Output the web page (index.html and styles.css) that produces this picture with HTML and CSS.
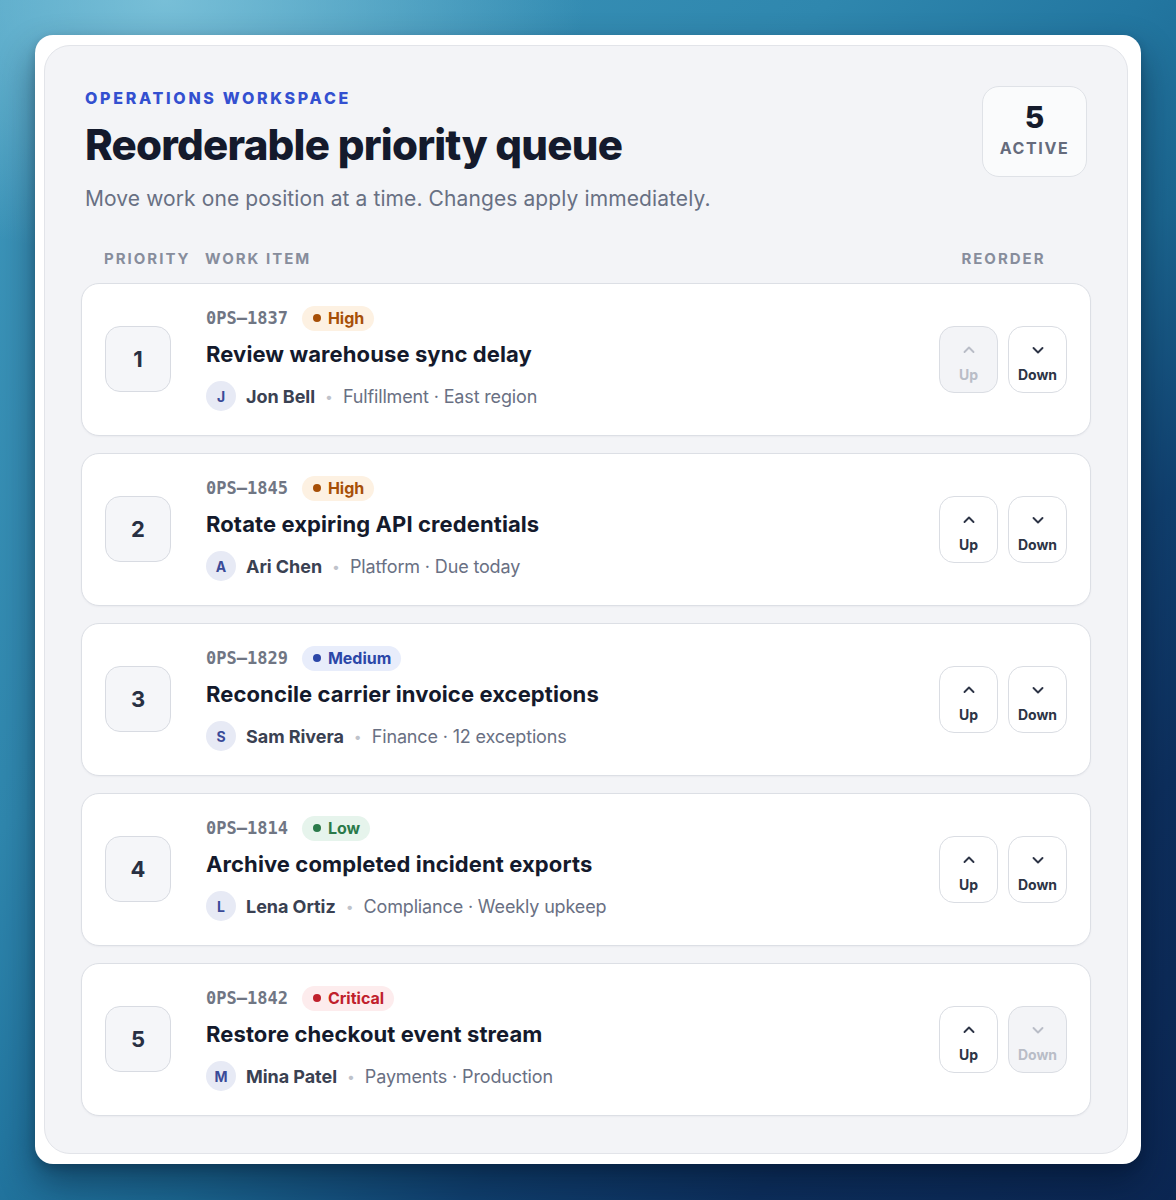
FILE: index.html
```html
<!DOCTYPE html>
<html lang="en">
<head>
<meta charset="utf-8">
<title>Reorderable priority queue</title>
<link rel="stylesheet" href="styles.css">
</head>
<body>
<div class="frame">
  <main class="panel">
    <header class="head">
      <div class="head-text">
        <div class="eyebrow">OPERATIONS WORKSPACE</div>
        <h1 class="title">Reorderable priority queue</h1>
        <p class="sub">Move work one position at a time. Changes apply immediately.</p>
      </div>
      <div class="count">
        <div class="count-num">5</div>
        <div class="count-label">ACTIVE</div>
      </div>
    </header>

    <div class="cols">
      <span class="col-pri">PRIORITY</span>
      <span class="col-item">WORK ITEM</span>
      <span class="col-re">REORDER</span>
    </div>

    <ol class="list">
      <li class="row">
        <div class="rank">1</div>
        <div class="body">
          <div class="line1"><span class="id">0PS–1837</span><span class="pill high"><i class="dot"></i>High</span></div>
          <div class="name">Review warehouse sync delay</div>
          <div class="meta"><span class="av">J</span><span class="who">Jon Bell</span><span class="sep">•</span><span class="info">Fulfillment · East region</span></div>
        </div>
        <div class="btns">
          <button class="btn" disabled><svg viewBox="0 0 14 14"><path d="M2.5 9 L7 4.5 L11.5 9"/></svg><span>Up</span></button>
          <button class="btn"><svg viewBox="0 0 14 14"><path d="M2.5 5 L7 9.5 L11.5 5"/></svg><span>Down</span></button>
        </div>
      </li>
      <li class="row">
        <div class="rank">2</div>
        <div class="body">
          <div class="line1"><span class="id">0PS–1845</span><span class="pill high"><i class="dot"></i>High</span></div>
          <div class="name">Rotate expiring API credentials</div>
          <div class="meta"><span class="av">A</span><span class="who">Ari Chen</span><span class="sep">•</span><span class="info">Platform · Due today</span></div>
        </div>
        <div class="btns">
          <button class="btn"><svg viewBox="0 0 14 14"><path d="M2.5 9 L7 4.5 L11.5 9"/></svg><span>Up</span></button>
          <button class="btn"><svg viewBox="0 0 14 14"><path d="M2.5 5 L7 9.5 L11.5 5"/></svg><span>Down</span></button>
        </div>
      </li>
      <li class="row">
        <div class="rank">3</div>
        <div class="body">
          <div class="line1"><span class="id">0PS–1829</span><span class="pill medium"><i class="dot"></i>Medium</span></div>
          <div class="name">Reconcile carrier invoice exceptions</div>
          <div class="meta"><span class="av">S</span><span class="who">Sam Rivera</span><span class="sep">•</span><span class="info">Finance · 12 exceptions</span></div>
        </div>
        <div class="btns">
          <button class="btn"><svg viewBox="0 0 14 14"><path d="M2.5 9 L7 4.5 L11.5 9"/></svg><span>Up</span></button>
          <button class="btn"><svg viewBox="0 0 14 14"><path d="M2.5 5 L7 9.5 L11.5 5"/></svg><span>Down</span></button>
        </div>
      </li>
      <li class="row">
        <div class="rank">4</div>
        <div class="body">
          <div class="line1"><span class="id">0PS–1814</span><span class="pill low"><i class="dot"></i>Low</span></div>
          <div class="name">Archive completed incident exports</div>
          <div class="meta"><span class="av">L</span><span class="who">Lena Ortiz</span><span class="sep">•</span><span class="info">Compliance · Weekly upkeep</span></div>
        </div>
        <div class="btns">
          <button class="btn"><svg viewBox="0 0 14 14"><path d="M2.5 9 L7 4.5 L11.5 9"/></svg><span>Up</span></button>
          <button class="btn"><svg viewBox="0 0 14 14"><path d="M2.5 5 L7 9.5 L11.5 5"/></svg><span>Down</span></button>
        </div>
      </li>
      <li class="row">
        <div class="rank">5</div>
        <div class="body">
          <div class="line1"><span class="id">0PS–1842</span><span class="pill critical"><i class="dot"></i>Critical</span></div>
          <div class="name">Restore checkout event stream</div>
          <div class="meta"><span class="av">M</span><span class="who">Mina Patel</span><span class="sep">•</span><span class="info">Payments · Production</span></div>
        </div>
        <div class="btns">
          <button class="btn"><svg viewBox="0 0 14 14"><path d="M2.5 9 L7 4.5 L11.5 9"/></svg><span>Up</span></button>
          <button class="btn" disabled><svg viewBox="0 0 14 14"><path d="M2.5 5 L7 9.5 L11.5 5"/></svg><span>Down</span></button>
        </div>
      </li>
    </ol>
  </main>
</div>
</body>
</html>
```

FILE: styles.css
```css
* { box-sizing: border-box; }

html, body {
  margin: 0;
  padding: 0;
}

body {
  width: 1176px;
  height: 1200px;
  overflow: hidden;
  font-family: Inter, "Noto Sans", "Liberation Sans", sans-serif;
  color: #151b2c;
  background:
    radial-gradient(ellipse 420px 260px at 14% 0%, rgba(140, 205, 225, 0.75), rgba(140, 205, 225, 0) 100%),
    linear-gradient(135deg, #3f98bd 0%, #2f87ae 35%, #2377a1 48%, #1b6690 58%, #10406f 70%, #0d2f5d 82%, #0b2652 100%);
  padding: 35px 35px 0 35px;
}

.frame {
  width: 1106px;
  height: 1129px;
  background: #ffffff;
  border-radius: 18px;
  padding: 10px 13px 10px 9px;
  box-shadow: 0 18px 36px rgba(3, 15, 35, 0.45), 0 4px 10px rgba(3, 15, 35, 0.2);
}

.panel {
  height: 100%;
  background: #f3f4f7;
  border: 1px solid #e2e4e9;
  border-radius: 26px;
  padding: 40px 36px 0 36px;
}

.head {
  display: flex;
  justify-content: space-between;
  align-items: flex-start;
  padding: 0 4px;
}

.eyebrow {
  margin-top: 2px;
  font-size: 16px;
  line-height: 20px;
  font-weight: 800;
  letter-spacing: 2.7px;
  color: #3350d0;
}

.title {
  margin: 12px 0 0 0;
  font-size: 42px;
  line-height: 50px;
  font-weight: 800;
  letter-spacing: -0.75px;
  color: #141a2c;
}

.sub {
  margin: 15px 0 0 0;
  font-size: 21px;
  line-height: 28px;
  letter-spacing: 0.1px;
  color: #687083;
}

.count {
  width: 105px;
  height: 91px;
  background: #fafbfc;
  border: 1px solid #dfe2e7;
  border-radius: 17px;
  display: flex;
  flex-direction: column;
  align-items: center;
  justify-content: flex-start;
  padding-top: 13px;
}

.count-num {
  font-size: 30px;
  line-height: 34px;
  font-weight: 800;
  color: #151b2c;
}

.count-label {
  margin-top: 5px;
  font-size: 16px;
  line-height: 18px;
  font-weight: 700;
  letter-spacing: 1.6px;
  color: #656b7c;
}

.cols {
  margin-top: 37px;
  display: grid;
  grid-template-columns: 66px 1fr 128px;
  column-gap: 35px;
  padding: 0 24px 0 23px;
  font-size: 15px;
  line-height: 18px;
  font-weight: 700;
  letter-spacing: 2px;
  color: #878d9c;
  white-space: nowrap;
}

.col-re { text-align: center; padding-left: 1px; }

.list {
  list-style: none;
  margin: 15px 0 0 0;
  padding: 0;
  display: flex;
  flex-direction: column;
  gap: 17px;
}

.row {
  height: 153px;
  background: #ffffff;
  border: 1px solid #dcdfe5;
  border-radius: 18px;
  box-shadow: 0 1px 2px rgba(20, 30, 50, 0.04);
  display: grid;
  grid-template-columns: 66px 1fr auto;
  column-gap: 35px;
  align-items: center;
  padding: 0 23px;
}

.rank {
  width: 66px;
  height: 66px;
  background: #f5f6f9;
  border: 1px solid #d8dbe2;
  border-radius: 15px;
  display: flex;
  align-items: center;
  justify-content: center;
  font-size: 22px;
  font-weight: 700;
  color: #283043;
  margin-top: -1px;
}

.body {
  display: flex;
  flex-direction: column;
  padding-bottom: 3px;
}

.line1 {
  display: flex;
  align-items: center;
  gap: 14px;
  height: 26px;
}

.id {
  font-family: "DejaVu Sans Mono", "Liberation Mono", monospace;
  font-size: 17px;
  font-weight: 700;
  color: #707684;
}

.pill {
  display: inline-flex;
  align-items: center;
  gap: 7px;
  height: 25px;
  padding: 0 10px 0 11px;
  border-radius: 13px;
  font-size: 16px;
  font-weight: 700;
}

.dot {
  width: 8px;
  height: 8px;
  border-radius: 50%;
  background: currentColor;
}

.pill.high { background: #fdf1e2; color: #a74f07; }
.pill.medium { background: #e8edfb; color: #2b47a8; }
.pill.low { background: #e6f4ec; color: #2a7a4a; }
.pill.critical { background: #fdeced; color: #c0202c; }

.name {
  margin-top: 9px;
  font-size: 22px;
  line-height: 28px;
  font-weight: 700;
  letter-spacing: 0.1px;
  color: #141a2c;
}

.meta {
  margin-top: 13px;
  display: flex;
  align-items: center;
  height: 30px;
  font-size: 18px;
}

.av {
  width: 30px;
  height: 30px;
  border-radius: 50%;
  background: #e7eaf5;
  color: #3a4a98;
  font-size: 14px;
  font-weight: 700;
  display: flex;
  align-items: center;
  justify-content: center;
  margin-right: 10px;
}

.who {
  font-weight: 700;
  color: #3a4152;
  letter-spacing: -0.05px;
}

.sep {
  margin: 0 10px 0 10px;
  font-size: 14px;
  color: #bfc3cb;
}

.info {
  color: #697083;
  letter-spacing: -0.15px;
}

.btns {
  display: flex;
  gap: 10px;
}

.btn {
  width: 59px;
  height: 67px;
  border: 1px solid #dadde3;
  border-radius: 15px;
  background: #ffffff;
  color: #2d3446;
  font-family: inherit;
  font-size: 14px;
  font-weight: 700;
  display: flex;
  flex-direction: column;
  align-items: center;
  justify-content: flex-start;
  padding: 16px 0 0 0;
  cursor: pointer;
}

.btn svg {
  width: 14px;
  height: 14px;
  fill: none;
  stroke: currentColor;
  stroke-width: 1.9;
  stroke-linecap: round;
  stroke-linejoin: round;
}

.btn span {
  margin-top: 10px;
  line-height: 16px;
}

.btn:disabled {
  background: #f3f4f7;
  color: #b9bdc7;
  cursor: default;
}
```
